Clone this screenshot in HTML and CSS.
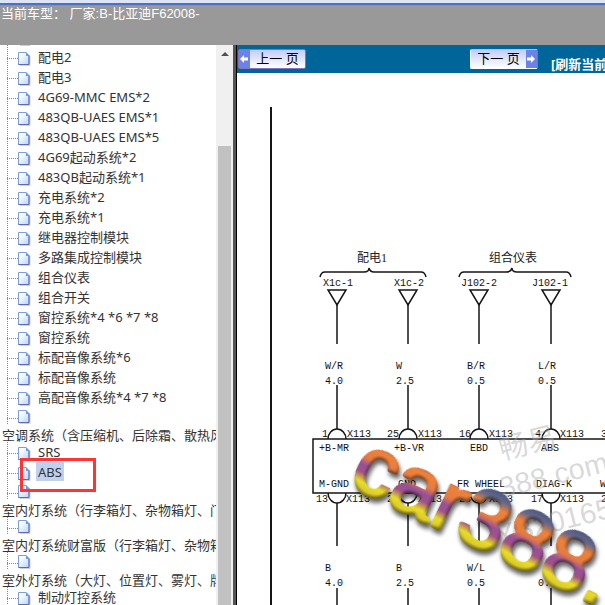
FILE: index.html
```html
<!DOCTYPE html>
<html lang="zh-CN">
<head>
<meta charset="utf-8">
<title>电路图</title>
<link rel="stylesheet" href="styles.css">
</head>
<body>
<svg class="defs" aria-hidden="true">
  <defs>
    <linearGradient id="paper" x1="0" y1="0" x2="1" y2="1"><stop offset=".2" stop-color="#fff"/><stop offset="1" stop-color="#b4d6fc"/></linearGradient>
    <symbol id="doc" viewBox="0 0 13 16">
      <path d="M2 14.5H12V5" fill="none" stroke="#cfcfd6" stroke-width="1"/>
      <path d="M.5 1.5H8L11 4.5V13.5H.5Z" fill="url(#paper)" stroke="#7c9edb"/>
      <path d="M11 4.5V13.5H.5" fill="none" stroke="#6468ac"/>
      <path d="M8 1L11.5 5H8Z" fill="#6f9ade"/>
    </symbol>
  </defs>
</svg>
<header class="top">当前车型： 厂家:B-比亚迪F62008-</header>
<div class="frames">
  <nav class="side">
    <ul class="tree">
      <li class="item"><svg class="doc"><use href="#doc"/></svg></li>
      <li class="item"><svg class="doc"><use href="#doc"/></svg><a href="#">配电2</a></li>
      <li class="item"><svg class="doc"><use href="#doc"/></svg><a href="#">配电3</a></li>
      <li class="item"><svg class="doc"><use href="#doc"/></svg><a href="#">4G69-MMC EMS*2</a></li>
      <li class="item"><svg class="doc"><use href="#doc"/></svg><a href="#">483QB-UAES EMS*1</a></li>
      <li class="item"><svg class="doc"><use href="#doc"/></svg><a href="#">483QB-UAES EMS*5</a></li>
      <li class="item"><svg class="doc"><use href="#doc"/></svg><a href="#">4G69起动系统*2</a></li>
      <li class="item"><svg class="doc"><use href="#doc"/></svg><a href="#">483QB起动系统*1</a></li>
      <li class="item"><svg class="doc"><use href="#doc"/></svg><a href="#">充电系统*2</a></li>
      <li class="item"><svg class="doc"><use href="#doc"/></svg><a href="#">充电系统*1</a></li>
      <li class="item"><svg class="doc"><use href="#doc"/></svg><a href="#">继电器控制模块</a></li>
      <li class="item"><svg class="doc"><use href="#doc"/></svg><a href="#">多路集成控制模块</a></li>
      <li class="item"><svg class="doc"><use href="#doc"/></svg><a href="#">组合仪表</a></li>
      <li class="item"><svg class="doc"><use href="#doc"/></svg><a href="#">组合开关</a></li>
      <li class="item"><svg class="doc"><use href="#doc"/></svg><a href="#">窗控系统*4 *6 *7 *8</a></li>
      <li class="item"><svg class="doc"><use href="#doc"/></svg><a href="#">窗控系统</a></li>
      <li class="item"><svg class="doc"><use href="#doc"/></svg><a href="#">标配音像系统*6</a></li>
      <li class="item"><svg class="doc"><use href="#doc"/></svg><a href="#">标配音像系统</a></li>
      <li class="item"><svg class="doc"><use href="#doc"/></svg><a href="#">高配音像系统*4 *7 *8</a></li>
      <li class="item blank"><svg class="doc"><use href="#doc"/></svg></li>
      <li class="group">空调系统（含压缩机、后除霜、散热风</li>
      <li class="item"><svg class="doc"><use href="#doc"/></svg><a href="#">SRS</a></li>
      <li class="item marked"><svg class="doc"><use href="#doc"/></svg><a href="#" class="current">ABS</a></li>
      <li class="item blank"><svg class="doc"><use href="#doc"/></svg></li>
      <li class="group">室内灯系统（行李箱灯、杂物箱灯、门</li>
      <li class="item blank"><svg class="doc"><use href="#doc"/></svg></li>
      <li class="group">室内灯系统财富版（行李箱灯、杂物箱</li>
      <li class="item blank"><svg class="doc"><use href="#doc"/></svg></li>
      <li class="group">室外灯系统（大灯、位置灯、雾灯、牌</li>
      <li class="item"><svg class="doc"><use href="#doc"/></svg><a href="#">制动灯控系统</a></li>
    </ul>
    <div class="scroll"><span class="up"></span><span class="thumb"></span></div>
  </nav>
  <main class="main">
    <div class="bar">
      <button class="page prev" type="button"><span class="arrow"><svg viewBox="0 0 10 10"><path d="M1 5L5 1V3.5H9V6.5H5V9Z"/></svg></span><span class="word">上一 页</span></button>
      <button class="page next" type="button"><span class="word">下一 页</span><span class="arrow"><svg viewBox="0 0 10 10"><path d="M9 5L5 1V3.5H1V6.5H5V9Z"/></svg></span></button>
      <a class="refresh" href="#">[刷新当前</a>
    </div>
    <svg class="diagram" viewBox="237 73 368 532" preserveAspectRatio="xMinYMin slice" role="img" aria-label="ABS">
      <defs>
        <linearGradient id="face" gradientUnits="userSpaceOnUse" x1="0" y1="-62" x2="0" y2="0">
          <stop offset="0" stop-color="#46547c"/><stop offset=".16" stop-color="#66688a"/><stop offset=".3" stop-color="#ee8238"/><stop offset=".48" stop-color="#e57b42"/><stop offset=".6" stop-color="#96509a"/><stop offset=".72" stop-color="#a05288"/><stop offset=".86" stop-color="#e8dc28"/><stop offset="1" stop-color="#d8c828"/>
        </linearGradient>
        <filter id="shade" x="-10%" y="-20%" width="120%" height="150%" color-interpolation-filters="sRGB">
          <feGaussianBlur in="SourceAlpha" stdDeviation="2" result="soft"/>
          <feDiffuseLighting in="soft" surfaceScale="2" diffuseConstant="1.2" lighting-color="#fff" result="light"><feDistantLight azimuth="240" elevation="60"/></feDiffuseLighting>
          <feComposite in="light" in2="SourceGraphic" operator="arithmetic" k1="1" k2="0" k3="0" k4="0" result="lit"/>
          <feComposite in="lit" in2="SourceAlpha" operator="in" result="body"/>
          <feOffset in="soft" dx="3" dy="3" result="low"/>
          <feComponentTransfer in="low" result="dark"><feFuncA type="linear" slope=".6"/></feComponentTransfer>
          <feMerge><feMergeNode in="dark"/><feMergeNode in="body"/></feMerge>
        </filter>
      </defs>
      <g class="lines">
        <path class="thick" d="M271 107V605"/>
        <path d="M320 277Q321 272 325 272H364Q369 272 369 268Q370 272 374 272H421Q425 272 426 277M459 277Q460 272 464 272H506Q511 272 512 268Q512 272 517 272H566Q570 272 571 277"/>
        <path d="M328 290H346L337 305ZM399 290H417L408 305ZM470 290H488L479 305ZM542 290H560L551 305Z"/>
        <path d="M337 305V344M408 305V344M479 305V344M551 305V344M337 385V429M408 385V429M479 385V429M551 385V429"/>
        <path d="M328 439A9 10 0 0 1 346 439M399 439A9 10 0 0 1 417 439M470 439A9 10 0 0 1 488 439M542 439A9 10 0 0 1 560 439"/>
        <path d="M605 439H313V493H605"/>
        <path d="M328 493A9 10 0 0 0 346 493M399 493A9 10 0 0 0 417 493M470 493A9 10 0 0 0 488 493M542 493A9 10 0 0 0 560 493"/>
        <path d="M337 503V546M408 503V546M479 503V546M551 503V546M337 588V605M408 588V605M479 588V605M551 588V605"/>
      </g>
      <g class="names"><text x="357" y="262">配电1</text><text x="489" y="262">组合仪表</text></g>
      <g class="labels">
        <text x="323" y="286">X1c-1</text><text x="394" y="286">X1c-2</text><text x="461" y="286">J102-2</text><text x="532" y="286">J102-1</text>
        <text x="325" y="369">W/R</text><text x="396" y="369">W</text><text x="467" y="369">B/R</text><text x="538" y="369">L/R</text>
        <text x="325" y="384">4.0</text><text x="396" y="384">2.5</text><text x="467" y="384">0.5</text><text x="538" y="384">0.5</text>
        <text x="322" y="437">1</text><text x="347" y="437">X113</text><text x="387" y="437">25</text><text x="418" y="437">X113</text>
        <text x="459" y="437">16</text><text x="489" y="437">X113</text><text x="535" y="437">4</text><text x="560" y="437">X113</text><text x="601" y="437">3</text>
        <text x="319" y="451">+B-MR</text><text x="394" y="451">+B-VR</text><text x="470" y="451">EBD</text><text x="541" y="451">ABS</text>
        <text x="319" y="487">M-GND</text><text x="398" y="487">GND</text><text x="457" y="487">FR WHEEL</text><text x="536" y="487">DIAG-K</text><text x="600" y="487">W</text>
        <text x="316" y="502">13</text><text x="346" y="502">X113</text><text x="387" y="502">26</text><text x="418" y="502">X113</text>
        <text x="459" y="502">28</text><text x="489" y="502">X113</text><text x="531" y="502">17</text><text x="560" y="502">X113</text><text x="601" y="502">2</text>
        <text x="325" y="571">B</text><text x="396" y="571">B</text><text x="467" y="571">W/L</text>
        <text x="325" y="586">4.0</text><text x="396" y="586">2.5</text><text x="467" y="586">0.5</text><text x="538" y="586">0.5</text>
      </g>
      <g class="stamp">
        <text transform="translate(502 460) rotate(-14)">畅易</text>
        <text transform="translate(502 498) rotate(-14)">388.com</text>
        <text transform="translate(498 546) rotate(-14)">YB20165</text>
      </g>
      <text class="brand" transform="translate(347 484) rotate(26)">car388.</text>
    </svg>
  </main>
</div>
</body>
</html>
```
FILE: styles.css
```css
*, *::after { box-sizing: border-box; }
body {
  margin: 0;
  height: 100vh;
  display: flex;
  flex-direction: column;
  overflow: hidden;
  background: #fff;
  color: #333;
  font: 13px/20px "Noto Sans", "Noto Sans CJK SC", sans-serif;
}
a { color: inherit; text-decoration: none; }
.defs { position: absolute; width: 0; height: 0; }
.top {
  flex: none;
  height: 45px;
  padding-top: 4px;
  padding-left: 1px;
  background: linear-gradient(#dde4f6 0 3px, #4a70c8 3px 5px, #7f93bd 5px 6px, #999 6px);
  color: #fff;
  font-family: "Liberation Sans", "Noto Sans CJK SC", sans-serif;
}
.frames { flex: 1; min-height: 0; display: flex; }
.side {
  flex: 0 0 237px;
  display: flex;
  border-right: 1px solid #000;
  box-shadow: inset -3px 0 #555;
  padding-right: 3px;
  overflow: hidden;
}
.tree {
  flex: 1;
  min-width: 0;
  margin: -18px 0 0;
  padding: 0;
  list-style: none;
  overflow: hidden;
  white-space: nowrap;
}
.item {
  position: relative;
  display: flex;
  height: 20px;
  margin-left: 7px;
  padding-left: 11px;
  background:
    repeating-linear-gradient(#888 0 1px, transparent 1px 2px) 0 0 / 1px 100% no-repeat,
    repeating-linear-gradient(90deg, #888 0 1px, transparent 1px 2px) 0 11px / 11px 1px no-repeat;
}
.doc { flex: none; width: 13px; height: 16px; margin-top: 4px; margin-right: 5px; }
.item a { padding: 0 2px; }
.item .current { height: 19px; background: #bfd1ee; }
.blank { height: 18px; }
.blank .doc { margin-top: 2px; }
.group { height: 17px; padding-left: 2px; }
.marked::after {
  content: "";
  position: absolute;
  z-index: 1;
  left: 13px;
  top: -4px;
  width: 76px;
  height: 34px;
  border: 3px solid #ff3434;
}
.scroll {
  flex: 0 0 17px;
  display: flex;
  flex-direction: column;
  align-items: center;
  background: #f0f0f0;
}
.up {
  margin: 7px 0 90px;
  border: 4px solid transparent;
  border-top: 0;
  border-bottom-color: #505050;
}
.thumb { flex: 1; width: 13px; background: #c1c1c1; }
.main { flex: 1; min-width: 0; display: flex; flex-direction: column; }
.bar {
  flex: none;
  display: flex;
  align-items: center;
  height: 28px;
  padding-left: 1px;
  background: #069;
  white-space: nowrap;
  overflow: hidden;
}
.page {
  flex: none;
  display: flex;
  align-items: stretch;
  width: 68px;
  height: 20px;
  padding: 0;
  border: 1px solid #8274c0;
  border-radius: 2px;
  background: linear-gradient(#c3ccf8, #fff);
  color: #000;
  font: 13px/17px "Liberation Sans", "Noto Sans CJK SC", sans-serif;
}
.next { margin-left: 164px; border-color: #c8b8dc #6878d0 #fff #fff; }
.word { flex: 1; text-align: center; }
.arrow { display: flex; align-items: center; width: 11px; background: #6b82e6; }
.arrow svg { width: 10px; height: 10px; fill: #fff; }
.refresh { margin-left: 13px; padding-top: 9px; color: #fff; font-weight: bold; }
.diagram { flex: 1; min-height: 0; width: 100%; }
.lines { fill: none; stroke: #161616; stroke-width: 1.5; }
.thick { stroke-width: 2; }
.names { fill: #222; font: 12px "Liberation Serif", "Noto Sans CJK SC", serif; }
.labels { fill: #111; font: 10px "Liberation Mono", monospace; }
.stamp { fill: #aaa; fill-opacity: .45; font: 29px "Liberation Sans", "Noto Sans CJK SC", sans-serif; }
.brand {
  fill: url(#face);
  stroke: url(#face);
  stroke-width: 4;
  stroke-linejoin: round;
  font: 84px "Liberation Sans", sans-serif;
  filter: url(#shade);
}
```
